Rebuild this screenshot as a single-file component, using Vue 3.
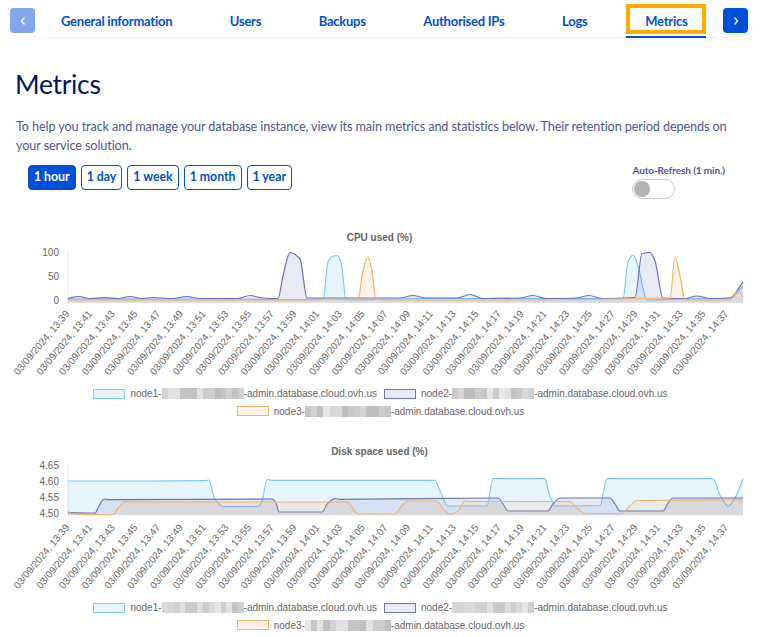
<template>
  <div class="page">
    <nav class="tabs">
      <button class="arrow arrow-off" aria-label="Previous">
        <svg width="8" height="10" viewBox="0 0 8 10"><path d="M5.5 1.5 2.5 5l3 3.5" /></svg>
      </button>
      <ul class="tab-list">
        <li v-for="tab in tabs" :key="tab" class="tab" :class="{ active: tab === 'Metrics' }">{{ tab }}</li>
      </ul>
      <button class="arrow" aria-label="Next">
        <svg width="8" height="10" viewBox="0 0 8 10"><path d="M2.5 1.5 5.5 5l-3 3.5" /></svg>
      </button>
    </nav>

    <h1 class="title">Metrics</h1>
    <p class="intro">
      To help you track and manage your database instance, view its main metrics and statistics below. Their retention period depends on your service solution.
    </p>

    <div class="controls">
      <div class="periods">
        <button v-for="p in periods" :key="p" class="period" :class="{ selected: p === period }" @click="period = p">{{ p }}</button>
      </div>
      <div class="refresh">
        <span class="refresh-label">Auto-Refresh (1 min.)</span>
        <span class="toggle"><span class="knob"></span></span>
      </div>
    </div>

    <section v-for="chart in charts" :key="chart.title" class="chart" :class="chart.cls">
      <h2 class="chart-title">{{ chart.title }}</h2>
      <svg class="plot" width="763" height="140" viewBox="0 20 763 140">
        <line class="axis" x1="68" :y1="chart.top" x2="68" :y2="chart.base" />
        <text v-for="t in chart.yTicks" :key="t[0]" class="y-tick" x="59" :y="t[1]">{{ t[0] }}</text>
        <g v-for="s in chart.series" :key="s.name">
          <path :d="areaPath(s.points, chart.base)" :fill="s.fill" />
          <path :d="linePath(s.points)" :stroke="s.stroke" class="line" />
        </g>
        <text v-for="(t, i) in xTicks" :key="t" class="x-tick" :transform="tickTransform(i, chart.tickY)">{{ t }}</text>
      </svg>
      <div class="legend">
        <div v-for="s in chart.series" :key="s.name" class="legend-item">
          <span class="swatch" :style="{ background: s.fill, borderColor: s.stroke }"></span>
          <span class="legend-text">{{ s.name }}-<span class="blur" :style="{ background: mosaic(s.seed), width: s.blur + 'px' }"></span>-admin.database.cloud.ovh.us</span>
        </div>
      </div>
    </section>
  </div>
</template>

<script setup>
import { ref } from 'vue'

const tabs = ['General information', 'Users', 'Backups', 'Authorised IPs', 'Logs', 'Metrics']
const periods = ['1 hour', '1 day', '1 week', '1 month', '1 year']
const period = ref('1 hour')

const blue = { stroke: '#7cc8ff', fill: 'rgba(124, 200, 255, 0.18)' }
const navy = { stroke: '#6b74b4', fill: 'rgba(70, 80, 160, 0.12)' }
const orange = { stroke: '#f6b26b', fill: 'rgba(246, 170, 90, 0.14)' }

// one tick every two minutes, from 13:39 to 14:37
const xTicks = []
for (let i = 0; i < 30; i++) {
  const total = 13 * 60 + 39 + i * 2
  xTicks.push(`03/09/2024, ${Math.floor(total / 60)}:${String(total % 60).padStart(2, '0')}`)
}

function tickTransform(i, y) {
  return `translate(${70 + i * 22.72} ${y}) rotate(-50)`
}

const charts = [
  {
    title: 'CPU used (%)',
    cls: 'chart-cpu',
    top: 26,
    base: 76.7,
    tickY: 88,
    yTicks: [['100', 29.5], ['50', 53.5], ['0', 78]],
    series: [
      {
        name: 'node1', ...blue, seed: 3, blur: 82,
        points: [[68, 73], [200, 73], [278, 73.5], [323, 73], [328, 36], [332, 30.5], [337, 29.5], [341, 36], [346, 73], [352, 74], [420, 72.5], [520, 72.5], [623, 72.5], [628, 36], [633, 29], [638, 40], [647, 74], [680, 73], [730, 72], [743, 60]]
      },
      {
        name: 'node2', ...navy, seed: 11, blur: 82,
        points: [[68, 72.5], [79, 70.5], [90, 72.5], [105, 71.7], [118, 72.5], [130, 70.5], [142, 72.5], [153, 71.5], [172, 72.5], [187, 70.5], [200, 72.5], [238, 72.5], [250, 69.5], [262, 72], [278, 72.5], [283, 50], [290, 26.5], [300, 33], [307, 72], [330, 72], [400, 72], [413, 69.5], [426, 72], [457, 72], [470, 68.5], [483, 72.5], [520, 72], [533, 69.5], [546, 72.5], [576, 72], [589, 69.5], [602, 72.5], [635, 71.5], [642, 27.5], [650, 26.5], [655, 35], [663, 72], [685, 72.5], [697, 70], [710, 72.5], [730, 72], [743, 56]]
      },
      {
        name: 'node3', ...orange, seed: 19, blur: 86,
        points: [[68, 74], [300, 74], [358, 73], [363, 45], [368, 31], [372, 45], [376, 73], [385, 74], [500, 74], [670, 72], [675, 31.5], [680, 50], [685, 74], [730, 74], [738, 65], [743, 71]]
      }
    ]
  },
  {
    title: 'Disk space used (%)',
    cls: 'chart-disk',
    top: 24,
    base: 74.3,
    tickY: 86.7,
    yTicks: [['4.65', 27.5], ['4.60', 43.5], ['4.55', 60], ['4.50', 76]],
    series: [
      {
        name: 'node1', ...blue, seed: 29, blur: 82,
        points: [[68, 40], [150, 40], [205, 39.5], [209, 39], [214, 56], [223, 65.7], [258, 65.5], [262, 60], [267, 38.5], [272, 39.3], [435, 39.3], [440, 50], [448, 65], [487, 65], [493, 37.7], [545, 37.7], [549, 52], [555, 65], [600, 64.5], [607, 37.7], [713, 37.7], [720, 54], [728, 65], [736, 55], [743, 38]]
      },
      {
        name: 'node2', ...navy, seed: 37, blur: 82,
        points: [[68, 71.7], [95, 72], [99, 65], [104, 58], [110, 58.7], [272, 58], [276, 62], [279, 71], [322, 71], [328, 62], [335, 57.7], [340, 58.3], [498, 57], [503, 63], [508, 70], [548, 70], [553, 63], [560, 57], [610, 57], [615, 63], [620, 70], [663, 70], [668, 62], [673, 57], [743, 57]]
      },
      {
        name: 'node3', ...orange, seed: 43, blur: 86,
        points: [[68, 70], [72, 73], [113, 73.5], [118, 67], [125, 60.7], [130, 61], [347, 61], [352, 66], [358, 73], [395, 73], [401, 66], [408, 60], [437, 60], [443, 68], [450, 73], [458, 70], [465, 60], [470, 60.5], [570, 60.5], [577, 67], [585, 72.5], [622, 72.5], [629, 66], [637, 59.5], [743, 59]]
      }
    ]
  }
]

// monotone cubic through the points, no overshoot on the long flat runs
function linePath(pts) {
  const n = pts.length
  const slopes = []
  for (let i = 0; i < n - 1; i++) {
    slopes.push((pts[i + 1][1] - pts[i][1]) / (pts[i + 1][0] - pts[i][0]))
  }
  const tangents = pts.map((_, i) => {
    if (i === 0) return slopes[0]
    if (i === n - 1) return slopes[n - 2]
    const a = slopes[i - 1]
    const b = slopes[i]
    return a * b <= 0 ? 0 : (2 * a * b) / (a + b)
  })
  let d = `M${pts[0][0]} ${pts[0][1]}`
  for (let i = 0; i < n - 1; i++) {
    const dx = (pts[i + 1][0] - pts[i][0]) / 3
    const c1y = pts[i][1] + tangents[i] * dx
    const c2y = pts[i + 1][1] - tangents[i + 1] * dx
    d += ` C${(pts[i][0] + dx).toFixed(1)} ${c1y.toFixed(1)} ${(pts[i + 1][0] - dx).toFixed(1)} ${c2y.toFixed(1)} ${pts[i + 1][0]} ${pts[i + 1][1]}`
  }
  return d
}

function areaPath(pts, base) {
  return `${linePath(pts)} L${pts[pts.length - 1][0]} ${base} L${pts[0][0]} ${base} Z`
}

// hostname part is pixelated in the screenshot
function mosaic(seed) {
  const stops = []
  let v = seed
  for (let i = 0; i < 14; i++) {
    v = (v * 37 + 11) % 101
    const g = 190 + (v % 45)
    stops.push(`rgb(${g},${g},${g}) ${(i * 100) / 14}% ${((i + 1) * 100) / 14}%`)
  }
  return `linear-gradient(90deg, ${stops.join(', ')})`
}
</script>

<style>
html, body {
  margin: 0;
  background: #fff;
}
</style>

<style scoped>
.page {
  width: 763px;
  height: 637px;
  overflow: hidden;
  font-family: Lato, "Noto Sans", sans-serif;
}

.tabs {
  display: flex;
  align-items: flex-start;
  padding: 8px 15px 0 10px;
  height: 38px;
  box-sizing: border-box;
}

.arrow {
  width: 25px;
  height: 25px;
  flex: none;
  display: flex;
  align-items: center;
  justify-content: center;
  padding: 0;
  border: none;
  border-radius: 4px;
  background: #0050d7;
}

.arrow-off {
  background: #80a7eb;
}

.arrow path {
  fill: none;
  stroke: #fff;
  stroke-width: 1.3;
}

.tab-list {
  flex: 1;
  display: flex;
  list-style: none;
  margin: -8px 7px 0;
  padding: 0;
  height: 38px;
  box-sizing: border-box;
  border-bottom: 1px solid #e6eef8;
}

.tab {
  padding: 13px 28.8px 0;
  font-size: 13px;
  line-height: 17px;
  font-weight: 700;
  letter-spacing: -0.25px;
  color: #0050d7;
  white-space: nowrap;
  position: relative;
}

.tab:first-child {
  padding-left: 19px;
}

.tab.active {
  height: 38px;
  box-sizing: border-box;
  border-bottom: 2px solid #0050d7;
  padding: 13px 19px 0;
  margin-left: 10px;
}

/* orange highlight drawn over the active tab */
.tab.active::after {
  content: "";
  position: absolute;
  left: 0;
  right: 0;
  top: 4px;
  height: 30px;
  box-sizing: border-box;
  border: 4px solid #ffab00;
}

.title {
  margin: 28px 0 0 15px;
  font-size: 26.5px;
  line-height: 36px;
  font-weight: 400;
  letter-spacing: -0.3px;
  color: #00185e;
}

.intro {
  margin: 15px 20px 0 16px;
  font-size: 12.7px;
  line-height: 19px;
  letter-spacing: -0.12px;
  color: #4d5693;
}

.controls {
  display: flex;
  justify-content: space-between;
  margin-top: 10px;
  padding: 0 38px 0 28px;
}

.periods {
  display: flex;
  gap: 5px;
}

.period {
  height: 25px;
  padding: 0 5px;
  border: 1px solid #0050d7;
  border-radius: 4px;
  background: #fff;
  color: #0050d7;
  font: 700 12.3px/1 Lato, "Noto Sans", sans-serif;
}

.period.selected {
  background: #0050d7;
  color: #fff;
}

.refresh {
  display: flex;
  flex-direction: column;
  align-items: flex-start;
  gap: 3px;
  margin-top: -1px;
}

.refresh-label {
  font-size: 10px;
  line-height: 12px;
  font-weight: 700;
  letter-spacing: -0.1px;
  color: #4d5693;
}

.toggle {
  width: 43px;
  height: 20px;
  box-sizing: border-box;
  padding: 1px;
  border: 1px solid #c8c8c8;
  border-radius: 10px;
}

.knob {
  display: block;
  width: 16px;
  height: 16px;
  border-radius: 50%;
  background: #b4b4b4;
}

.chart {
  height: 197px;
}

.chart-cpu {
  margin-top: 27px;
  height: 215px;
}

.chart-title {
  margin: 0;
  height: 20px;
  padding: 6px 4px 0 0;
  box-sizing: border-box;
  text-align: center;
  font: 700 10px/12px "Liberation Sans", sans-serif;
  color: #666;
}

.chart-disk .chart-title {
  padding-top: 5px;
}

.plot {
  display: block;
}

.axis {
  stroke: #e6e6e6;
}

.line {
  fill: none;
  stroke-width: 1.2;
}

.y-tick {
  font: 10px "Liberation Sans", sans-serif;
  fill: #666;
  text-anchor: end;
}

.x-tick {
  font: 10px "Liberation Sans", sans-serif;
  fill: #666;
  text-anchor: end;
}

.legend {
  display: flex;
  flex-wrap: wrap;
  justify-content: center;
  gap: 0 7px;
  padding: 0 85px 0 83px;
  margin-top: -1px;
  font: 10px/17.5px "Liberation Sans", sans-serif;
  color: #666;
}

.chart-disk .legend {
  margin-top: -2px;
}

.legend-item {
  display: flex;
  align-items: center;
  gap: 5px;
  white-space: nowrap;
}

.swatch {
  width: 32px;
  height: 10px;
  box-sizing: border-box;
  border: 1px solid;
}

.blur {
  display: inline-block;
  height: 11px;
  vertical-align: -2px;
  filter: blur(0.6px);
}
</style>
